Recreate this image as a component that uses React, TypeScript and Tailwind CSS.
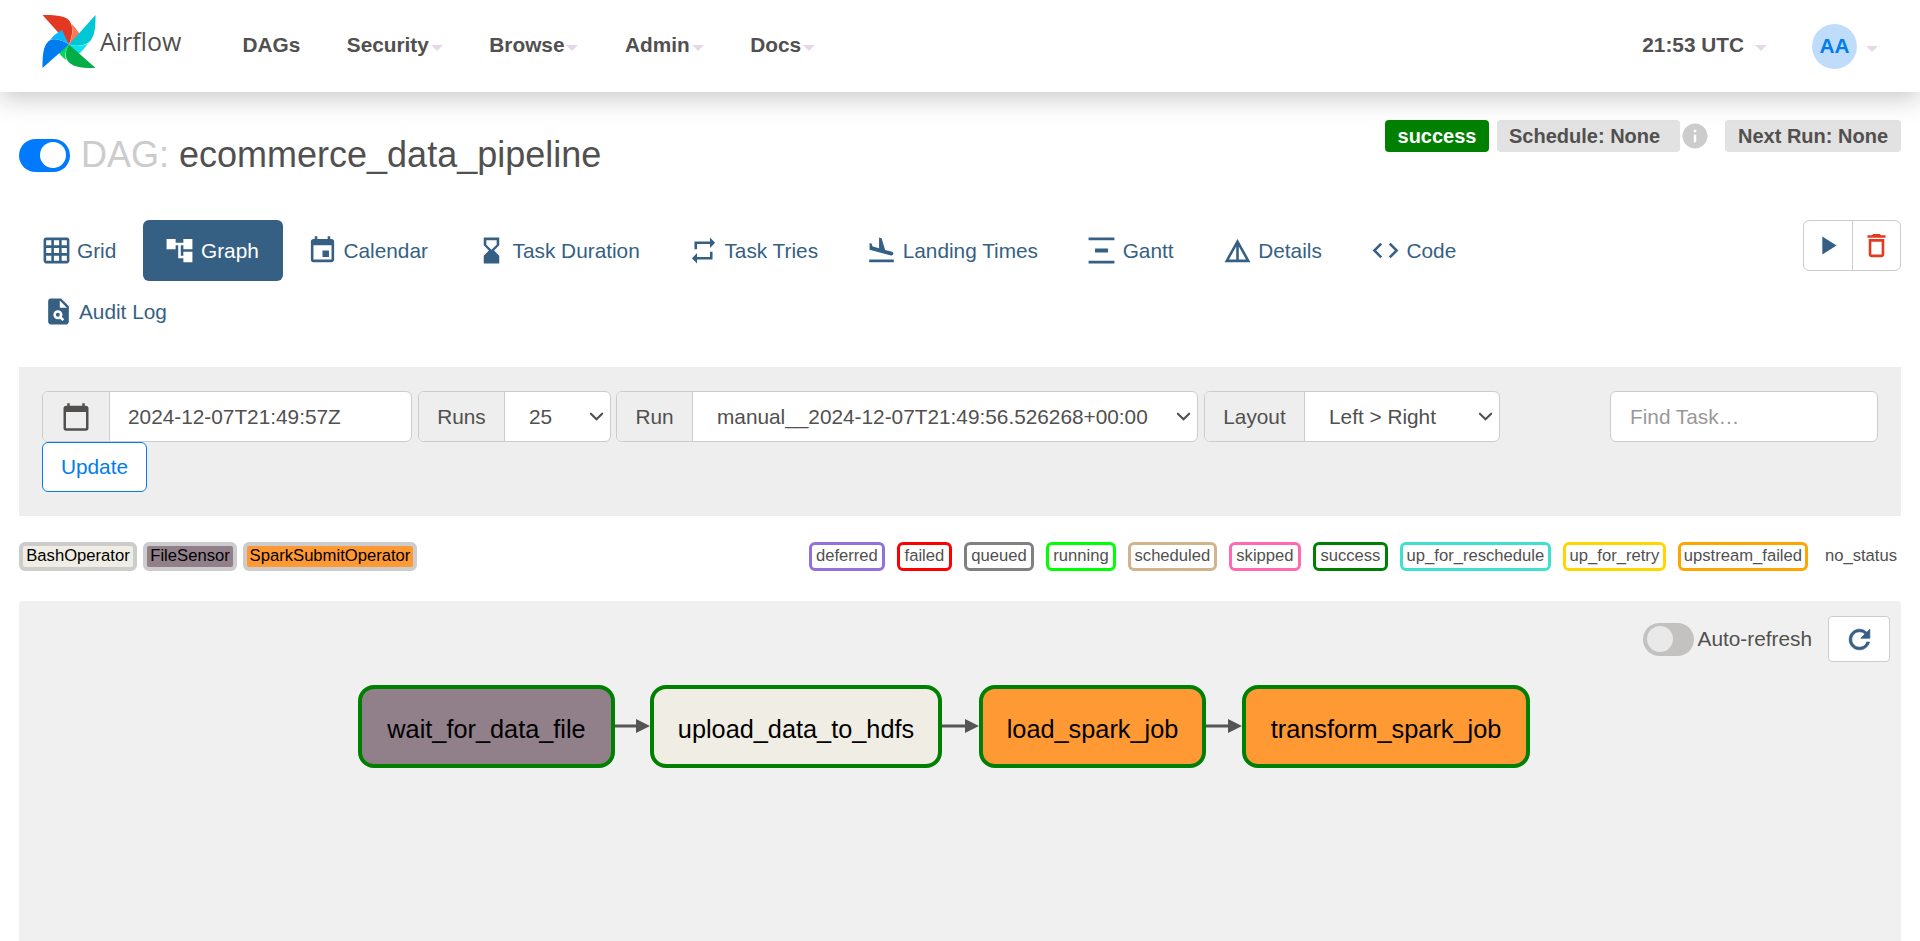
import React from 'react';
import {
  MdGridOn,
  MdAccountTree,
  MdEvent,
  MdHourglassBottom,
  MdRepeat,
  MdFlightLand,
  MdVerticalDistribute,
  MdDetails,
  MdCode,
  MdPlagiarism,
  MdPlayArrow,
  MdDeleteOutline,
  MdInfo,
  MdCalendarToday,
} from 'react-icons/md';

const Caret = () => (
  <span className="ml-[2px] inline-block h-0 w-0 translate-y-[3px] border-x-[6px] border-t-[6px] border-x-transparent border-t-[#e6d8e8]" />
);

const NavItem = ({ label, caret = true }: { label: string; caret?: boolean }) => (
  <span className="flex items-center text-[20.8px] font-bold text-[#51504f]">
    {label}
    {caret && <Caret />}
  </span>
);

const Logo = () => (
  <svg viewBox="0 0 158 158" className="-mt-[9px] h-[53px] w-[54px] shrink-0">
    <path d="M0 0 C30 0 62 0 78 15 C92 30 92 55 79 88 Z" fill="#e43921" />
    <path d="M86 26 C98 38 108 50 112 60 L79 88 C90 65 92 45 86 26 Z" fill="#ff7557" />
    <path d="M158 0 C158 30 158 60 140 80 C125 92 100 95 79 88 Z" fill="#00c7d4" />
    <path d="M79 88 C100 95 118 93 135 85 C125 100 115 112 105 118 Z" fill="#11e1ee" />
    <path d="M158 158 C125 158 95 158 78 140 C65 125 68 105 79 88 Z" fill="#00ad46" />
    <path d="M79 88 C68 105 65 122 72 135 C60 128 52 118 45 105 Z" fill="#04d659" />
    <path d="M0 158 C0 125 0 95 18 78 C35 65 60 75 79 88 Z" fill="#017cee" />
    <path d="M79 88 C60 75 40 68 22 75 C32 62 45 52 58 45 Z" fill="#0cb6ff" />
  </svg>
);

const Tab = ({ icon, label, active = false }: { icon: React.ReactNode; label: string; active?: boolean }) => (
  <a className={`flex h-[61px] items-center rounded-md px-6 text-[20.8px] ${active ? 'bg-[#365f84] text-white' : 'text-[#365f84]'}`}>
    <span className="mr-2 flex w-[26px] justify-center text-[31px] [&>svg]:shrink-0">{icon}</span>
    {label}
  </a>
);

const Addon = ({ children, className = '' }: { children: React.ReactNode; className?: string }) => (
  <span className={`flex items-center justify-center border-r border-[#ccc] bg-[#eee] text-[20.8px] text-[#51504f] ${className}`}>{children}</span>
);

const Group = ({ children, className = '' }: { children: React.ReactNode; className?: string }) => (
  <div className={`flex h-[51px] overflow-hidden rounded-md border border-[#ccc] bg-white ${className}`}>{children}</div>
);

const Chevron = () => (
  <svg viewBox="0 0 16 16" className="h-[15px] w-[15px] text-[#51504f]" fill="none" stroke="currentColor" strokeWidth="2.2" strokeLinecap="round">
    <path d="M2 5l6 6 6-6" />
  </svg>
);

const SelectBody = ({ value, className = '' }: { value: string; className?: string }) => (
  <span className={`flex flex-1 items-center justify-between pr-[6px] text-[20.8px] text-[#51504f] ${className}`}>
    {value}
    <Chevron />
  </span>
);

const operators = [
  { name: 'BashOperator', bg: 'bg-[#f0ede4]', width: 'w-[118px]' },
  { name: 'FileSensor', bg: 'bg-[#917f8a]', width: 'w-[94px]' },
  { name: 'SparkSubmitOperator', bg: 'bg-[#ff9933]', width: 'w-[174px]' },
];

const states = [
  { name: 'deferred', border: 'border-[#9370db]', width: 'w-[76px]' },
  { name: 'failed', border: 'border-[#ff0000]', width: 'w-[55px]' },
  { name: 'queued', border: 'border-[#808080]', width: 'w-[70px]' },
  { name: 'running', border: 'border-[#00ff00]', width: 'w-[70px]' },
  { name: 'scheduled', border: 'border-[#d2b48c]', width: 'w-[89px]' },
  { name: 'skipped', border: 'border-[#ff69b4]', width: 'w-[72px]' },
  { name: 'success', border: 'border-[#008000]', width: 'w-[75px]' },
  { name: 'up_for_reschedule', border: 'border-[#40e0d0]', width: 'w-[151px]' },
  { name: 'up_for_retry', border: 'border-[#ffd700]', width: 'w-[103px]' },
  { name: 'upstream_failed', border: 'border-[#ffa500]', width: 'w-[130px]' },
];

const Arrow = ({ width }: { width: number }) => (
  <svg viewBox={`0 0 ${width} 20`} width={width} height="20" className="-mt-[2px] shrink-0">
    <line x1="0" y1="10" x2={width - 12} y2="10" stroke="#555" strokeWidth="3" />
    <path d={`M${width - 14} 3 L${width} 10 L${width - 14} 17 Z`} fill="#555" />
  </svg>
);

const GraphNode = ({ label, className }: { label: string; className: string }) => (
  <div className={`flex h-[83px] items-center justify-center rounded-[16px] border-[4px] border-[#008000] pt-[6px] text-[25.3px] text-black ${className}`}>
    {label}
  </div>
);

export default function App() {
  return (
    <div className="flex h-[941px] flex-col overflow-hidden bg-white font-['Liberation_Sans',Arial,sans-serif]">
      <nav className="relative z-10 flex h-[92px] shrink-0 items-center bg-white pl-[42px] shadow-[0_6px_24px_rgba(0,0,0,0.22)]">
        <Logo />
        <span className="ml-[4px] -mt-[8px] font-['Open_Sans',sans-serif] text-[25px] text-[#51504f]">Airflow</span>
        <div className="ml-[61px] -mt-[2px] flex items-center gap-[46.5px]">
          <NavItem label="DAGs" caret={false} />
          <NavItem label="Security" />
          <NavItem label="Browse" />
          <NavItem label="Admin" />
          <NavItem label="Docs" />
        </div>
        <div className="ml-auto flex items-center pr-[42px]">
          <span className="-mt-[2px] flex items-center text-[20.8px] font-bold text-[#51504f]">
            21:53 UTC
            <span className="ml-[9px] flex"><Caret /></span>
          </span>
          <span className="ml-[45px] flex h-[45px] w-[45px] items-center justify-center rounded-full bg-[#bfdcfb] text-[20.8px] font-bold text-[#017cee]">AA</span>
          <span className="ml-[7px] flex"><Caret /></span>
        </div>
      </nav>

      <div className="flex min-h-0 flex-1 flex-col px-[19px]">
        <div className="flex items-start justify-between pt-[28px]">
          <div className="flex items-center pt-[15px]">
            <span className="flex h-[33px] w-[51px] items-center justify-end rounded-full bg-[#007bff] pr-[4px]">
              <span className="h-[26px] w-[26px] rounded-full bg-white" />
            </span>
            <h1 className="ml-[11px] text-[36px] leading-[40px] text-[#51504f]">
              <span className="text-[#ccc]">DAG: </span>ecommerce_data_pipeline
            </h1>
          </div>
          <div className="flex items-center">
            <span className="flex h-[32px] w-[104px] items-center justify-center rounded bg-[#008000] text-[20px] font-bold text-white">success</span>
            <span className="ml-[8px] flex h-[32px] w-[183px] items-center rounded bg-[#e2e2e2] pl-3 text-[20px] font-bold text-[#51504f]">Schedule: None</span>
            <MdInfo className="text-[30px] text-[#ccc]" />
            <span className="ml-[15px] flex h-[32px] w-[176px] items-center justify-center rounded bg-[#e2e2e2] text-[20px] font-bold text-[#51504f]">Next Run: None</span>
          </div>
        </div>

        <div className="mt-[45px] flex items-start justify-between">
          <div className="flex w-[1600px] flex-wrap gap-x-[2.7px]">
            <Tab icon={<MdGridOn />} label="Grid" />
            <Tab icon={<MdAccountTree />} label="Graph" active />
            <Tab icon={<MdEvent />} label="Calendar" />
            <Tab icon={<MdHourglassBottom />} label="Task Duration" />
            <Tab icon={<MdRepeat />} label="Task Tries" />
            <Tab icon={<MdFlightLand />} label="Landing Times" />
            <Tab icon={<MdVerticalDistribute />} label="Gantt" />
            <Tab icon={<MdDetails />} label="Details" />
            <Tab icon={<MdCode />} label="Code" />
            <div className="basis-full" />
            <div className="ml-[2px]">
              <Tab icon={<MdPlagiarism />} label="Audit Log" />
            </div>
          </div>
          <div className="flex h-[51px] w-[98px] overflow-hidden rounded-md border border-[#ccc]">
            <span className="flex flex-1 items-center justify-center border-r border-[#ccc] text-[31px] text-[#365f84]"><MdPlayArrow /></span>
            <span className="flex flex-1 items-center justify-center text-[31px] text-[#e43921]"><MdDeleteOutline /></span>
          </div>
        </div>

        <div className="mt-[25px] flex h-[149px] shrink-0 flex-col bg-[#eee] px-[23px] pt-[24px]">
          <div className="flex items-start">
            <Group className="w-[370px]">
              <Addon className="w-[67px] text-[31px]"><MdCalendarToday className="text-[30px]" /></Addon>
              <span className="flex items-center pl-[18px] text-[20.8px] text-[#51504f]">2024-12-07T21:49:57Z</span>
            </Group>
            <Group className="ml-[6px] w-[193px]">
              <Addon className="w-[86px]">Runs</Addon>
              <SelectBody value="25" className="pl-[24px]" />
            </Group>
            <Group className="ml-[5px] w-[582px]">
              <Addon className="w-[76px]">Run</Addon>
              <SelectBody value="manual__2024-12-07T21:49:56.526268+00:00" className="pl-[24px]" />
            </Group>
            <Group className="ml-[6px] w-[296px]">
              <Addon className="w-[100px]">Layout</Addon>
              <SelectBody value="Left > Right" className="pl-[24px]" />
            </Group>
            <div className="ml-auto flex h-[51px] w-[268px] items-center rounded-md border border-[#ccc] bg-white pl-[19px] text-[20.8px] text-[#999]">Find Task…</div>
          </div>
          <button className="flex h-[50px] w-[105px] items-center justify-center rounded-md border border-[#017cee] bg-white text-[20.8px] text-[#017cee]">Update</button>
        </div>

        <div className="mt-[26px] flex h-[29px] shrink-0 items-center text-[16.64px]">
          <div className="flex gap-[6px]">
            {operators.map((op) => (
              <span key={op.name} className={`flex h-[29px] items-center justify-center rounded-md border-[4px] border-[#ccc] text-black ${op.bg} ${op.width}`}>{op.name}</span>
            ))}
          </div>
          <div className="ml-auto flex items-center gap-[12px] pr-[4px]">
            {states.map((s) => (
              <span key={s.name} className={`flex h-[29px] items-center justify-center rounded-md border-[3px] bg-white text-[#51504f] ${s.border} ${s.width}`}>{s.name}</span>
            ))}
            <span className="ml-[5px] text-[#51504f]">no_status</span>
          </div>
        </div>

        <div className="mt-[30px] flex min-h-0 flex-1 flex-col rounded-t bg-[#f0f0f0] pr-[11px] pt-[15px]">
          <div className="flex items-center justify-end">
            <span className="flex h-[33px] w-[51px] items-center rounded-full bg-[#c3c2c1] pl-[4px]">
              <span className="h-[26px] w-[26px] rounded-full bg-[#e9e9e9]" />
            </span>
            <span className="ml-[4px] text-[20.8px] text-[#51504f]">Auto-refresh</span>
            <span className="ml-[16px] flex h-[46px] w-[62px] items-center justify-center rounded border border-[#ccc] bg-white text-[#365f84]">
              <svg viewBox="0 0 24 24" className="h-[31px] w-[31px]" fill="currentColor" stroke="currentColor" strokeWidth="0.6">
                <path d="M17.65 6.35A7.958 7.958 0 0012 4c-4.42 0-7.99 3.58-7.99 8s3.57 8 7.99 8c3.73 0 6.84-2.55 7.73-6h-2.08A5.99 5.99 0 0112 18c-3.31 0-6-2.69-6-6s2.69-6 6-6c1.66 0 3.14.69 4.22 1.78L13 11h7V4l-2.35 2.35z" />
              </svg>
            </span>
          </div>
          <div className="mt-[23px] flex items-center pl-[339px]">
            <GraphNode label="wait_for_data_file" className="w-[257px] bg-[#917f8a]" />
            <Arrow width={35} />
            <GraphNode label="upload_data_to_hdfs" className="w-[292px] bg-[#f0ede4]" />
            <Arrow width={37} />
            <GraphNode label="load_spark_job" className="w-[227px] bg-[#ff9933]" />
            <Arrow width={36} />
            <GraphNode label="transform_spark_job" className="w-[288px] bg-[#ff9933]" />
          </div>
        </div>
      </div>
    </div>
  );
}
